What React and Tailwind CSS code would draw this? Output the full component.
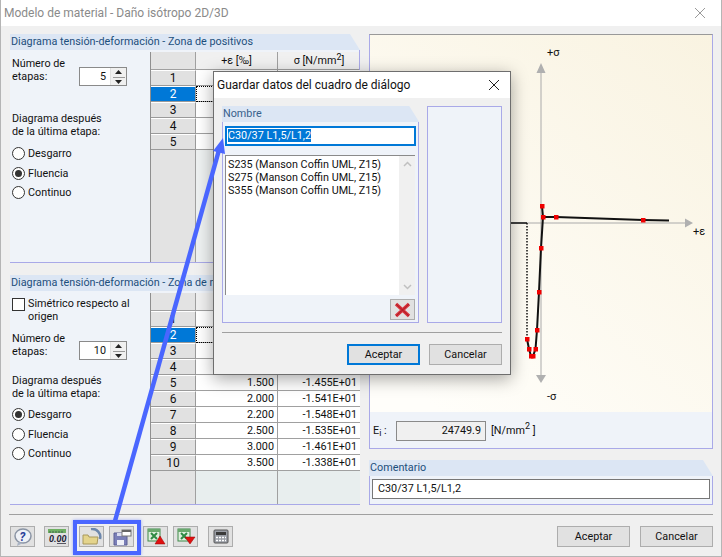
const fontCls = "font-['Roboto','Liberation_Sans',sans-serif]";

function PanelHeader({ children, className = '' }) {
  return (
    <div className={`h-4 bg-[#dce6f4] pl-[1px] text-[10.8px] leading-4 text-[#1c4f7c] whitespace-nowrap overflow-hidden [clip-path:polygon(0_0,calc(100%-10px)_0,100%_100%,0_100%)] ${className}`}>
      {children}
    </div>
  );
}

function Radio({ label, checked }) {
  return (
    <div className="flex items-center gap-[3px] h-[13px]">
      <span className="w-[13px] h-[13px] rounded-full border border-[#333] bg-white flex items-center justify-center shrink-0">
        {checked && <span className="w-[7px] h-[7px] rounded-full bg-[#333]" />}
      </span>
      <span>{label}</span>
    </div>
  );
}

function Spinner({ value, className = '' }) {
  return (
    <div className={`w-12 h-[19px] border border-[#8a8a8a] bg-white flex shrink-0 ${className}`}>
      <div className="flex-1 text-right pr-1 leading-[17px]">{value}</div>
      <div className="w-[16px] bg-[#f0f0f0] flex flex-col items-center justify-center gap-[1px] border-l border-[#e0e0e0]">
        <svg width="9" height="6" viewBox="0 0 9 6" className="mb-[1px]"><path d="M4.5 1 L8 5 L1 5 Z" fill="#222" /></svg>
        <div className="w-[12px] h-[1px] bg-[#999]" />
        <svg width="9" height="6" viewBox="0 0 9 6"><path d="M1 1 L8 1 L4.5 5 Z" fill="#222" /></svg>
      </div>
    </div>
  );
}

function RowHead({ n, active }) {
  return (
    <div className={`h-4 border-b border-r border-[#9a9a9a] border-t-[1px] border-t-white text-center text-[12px] leading-[14px] ${active ? 'bg-[#0078d7] text-white' : 'bg-[#e1e1e1]'}`}>
      {n}
    </div>
  );
}

function DataTable({ rows, fill }) {
  return (
    <div className="w-[209px] h-full flex flex-col border-l border-[#8f8f8f]">
      <div className="grid grid-cols-[45px_82px_82px] h-[18px] border-b border-[#a0a0a0] bg-[#f0f0f0] text-center leading-[17px]">
        <div className="bg-[#e3e3e3] border-r border-[#a0a0a0]" />
        <div className="border-r border-[#a0a0a0]">+ε [‰]</div>
        <div>σ [N/mm<sup className="text-[9px] leading-none">2</sup>]</div>
      </div>
      {rows.map((r, i) => (
        <div key={i} className="grid grid-cols-[45px_82px_82px] h-4">
          <RowHead n={i + 1} active={i === 1} />
          <div className={`bg-white border-b border-r border-[#a0a0a0] text-right pr-[3px] leading-[15px] ${i === 1 ? 'outline-1 outline-dotted outline-black -outline-offset-1' : ''}`}>{r[0]}</div>
          <div className="bg-white border-b border-[#a0a0a0] text-right pr-[3px] leading-[15px]">{r[1]}</div>
        </div>
      ))}
      <div className="flex-1 grid grid-cols-[45px_82px_82px]">
        <div className="bg-[#e3e3e3] border-r border-[#a0a0a0]" />
        <div className={`${fill} border-r border-[#a0a0a0]`} />
        <div className={fill} />
      </div>
    </div>
  );
}

function IconBtn({ children, className = '' }) {
  return (
    <button className={`w-[25px] h-[21px] border border-[#adadad] bg-[#e1e1e1] flex items-center justify-center shrink-0 ${className}`}>
      {children}
    </button>
  );
}

function DlgBtn({ children, primary, w = 'w-[73px]' }) {
  return (
    <button className={`${w} h-[21px] bg-[#e1e1e1] leading-[17px] ${primary ? 'border-2 border-[#0078d7]' : 'border border-[#adadad]'}`}>
      {children}
    </button>
  );
}

function ExcelIcon({ down }) {
  return (
    <svg width="20" height="18" viewBox="0 0 20 18">
      <rect x="2" y="1" width="12" height="12" fill="#dfeedd" stroke="#3f8a4a" />
      <path d="M2 1h12v3H2z" fill="#6aa86e" />
      <path d="M5 5 L11 11 M11 5 L5 11" stroke="#2f8a45" strokeWidth="2" />
      {down
        ? <path d="M9 9 H19 L14 16 Z" fill="#e01010" stroke="#900" strokeWidth="0.5" />
        : <path d="M14 8 L19 16 H9 Z" fill="#e01010" stroke="#900" strokeWidth="0.5" />}
    </svg>
  );
}

// stress-strain plot, coordinates are relative to the chart panel
function Chart() {
  const curve = [[172, 171], [173, 182], [186, 182], [273, 185], [299, 185.5]];
  const neg = [[157, 304], [159, 314], [161, 321], [163, 321], [165.5, 314], [167, 295], [169, 257], [171, 213], [173, 182]];
  const pts = [[172, 171], [173, 182], [186, 182], [273, 185], [171, 213], [169, 257], [167, 295], [165.5, 314], [163, 321], [161, 321], [159, 314], [157, 304]];
  return (
    <svg width="342" height="377" viewBox="0 0 342 377" className="block">
      <defs>
        <linearGradient id="bgGrad" x1="1" y1="0" x2="0.2" y2="1">
          <stop offset="0" stopColor="#f9f3e1" />
          <stop offset="1" stopColor="#fffefa" />
        </linearGradient>
      </defs>
      <rect width="342" height="377" fill="url(#bgGrad)" />
      <path d="M171 34 V342 M12 188 H318" stroke="#aaa" strokeWidth="1" fill="none" />
      <path d="M171 28 L166.500 38 H175.500 Z M171 348 L166 340 H176 Z M323 188 L315 183.500 V192.500 Z" fill="#b0b0b0" />
      <path d="M12 188 H157" stroke="#111" strokeWidth="1.500" />
      <path d="M157 188 V304" stroke="#111" strokeWidth="1.500" strokeDasharray="1.500 1.500" />
      <polyline points={curve.map(p => p.join(',')).join(' ')} fill="none" stroke="#111" strokeWidth="2" />
      <polyline points={neg.map(p => p.join(',')).join(' ')} fill="none" stroke="#111" strokeWidth="2" />
      {pts.map((p, i) => <rect key={i} x={p[0] - 2} y={p[1] - 2} width="4.500" height="4.500" fill="#f00000" />)}
      <text x="177" y="21" fontSize="11" fill="#111">+σ</text>
      <text x="323" y="200" fontSize="11" fill="#111">+ε</text>
      <text x="177" y="365" fontSize="11" fill="#111">-σ</text>
    </svg>
  );
}

export default function App() {
  const upper = [['', ''], ['', ''], ['', ''], ['', ''], ['', '']];
  const lower = [['', ''], ['', ''], ['', ''], ['', ''],
    ['1.500', '-1.455E+01'], ['2.000', '-1.541E+01'], ['2.200', '-1.548E+01'],
    ['2.500', '-1.535E+01'], ['3.000', '-1.461E+01'], ['3.500', '-1.338E+01']];

  return (
    <div className={`relative w-[722px] h-[557px] overflow-hidden bg-[#f0f0f0] border-x border-b border-[#b5b5b5] text-[10.8px] text-[#111] ${fontCls}`}>
      {/* title bar */}
      <div className="h-[26px] bg-white flex items-center justify-between pl-[3px] pr-[15px]">
        <span className="text-[12px] text-[#8a8a8a]">Modelo de material - Daño isótropo 2D/3D</span>
        <svg width="12" height="12" viewBox="0 0 12 12"><path d="M1 1 L11 11 M11 1 L1 11" stroke="#9a9a9a" strokeWidth="1" /></svg>
      </div>

      <div className="flex gap-[9px] pl-[9px] pr-[7px] pt-2">
        {/* left column */}
        <div className="w-[350px] flex flex-col gap-[12px]">
          <div className="h-[229px] flex flex-col">
            <PanelHeader>Diagrama tensión-deformación - Zona de positivos</PanelHeader>
            <div className="flex-1 min-h-0 flex bg-[#eff3f9] border-b border-r border-[#a9a9e8] pt-[2px] pl-[2px]">
              <div className="w-[138px] pt-[5px] leading-[13px]">
                <div className="flex items-start">
                  <span className="w-[67px]">Número de etapas:</span>
                  <Spinner value="5" className="mt-[10px]" />
                </div>
                <div className="mt-[26px]">Diagrama después<br />de la última etapa:</div>
                <div className="mt-[9px] flex flex-col gap-[6.5px]">
                  <Radio label="Desgarro" />
                  <Radio label="Fluencia" checked />
                  <Radio label="Continuo" />
                </div>
              </div>
              <DataTable rows={upper} fill="bg-[#eef1f1]" />
            </div>
          </div>

          <div className="h-[230px] flex flex-col">
            <PanelHeader>Diagrama tensión-deformación - Zona de negativos</PanelHeader>
            <div className="flex-1 min-h-0 flex bg-[#eff3f9] border-b border-r border-[#a9a9e8] pt-[2px] pl-[2px]">
              <div className="w-[138px] pt-[4px] leading-[13px]">
                <div className="flex gap-[3px]">
                  <span className="w-[13px] h-[13px] mt-[1px] border border-[#333] bg-white shrink-0" />
                  <span>Simétrico respecto al origen</span>
                </div>
                <div className="mt-[9px] flex items-start">
                  <span className="w-[67px]">Número de etapas:</span>
                  <Spinner value="10" className="mt-[9px]" />
                </div>
                <div className="mt-[14px]">Diagrama después<br />de la última etapa:</div>
                <div className="mt-[8px] flex flex-col gap-[6.5px]">
                  <Radio label="Desgarro" checked />
                  <Radio label="Fluencia" />
                  <Radio label="Continuo" />
                </div>
              </div>
              <DataTable rows={lower} fill="bg-[#e8eeee]" />
            </div>
          </div>
        </div>

        {/* right column */}
        <div className="w-[344px] flex flex-col gap-[11px]">
          <div className="h-[415px] flex flex-col bg-[#eff3f9] border-x border-b border-[#a9a9e8] border-t border-t-[#999]">
            <Chart />
            <div className="flex items-center pt-[9px] pl-[3px]">
              <span className="w-[23px]">E<sub className="text-[9px]">i</sub> :</span>
              <div className="w-[90px] h-[20px] border border-[#8a8a8a] bg-[#f0f0f0] text-right pr-1 leading-[18px]">24749.9</div>
              <span className="ml-[5px]">[N/mm<sup className="text-[9px] leading-none">2</sup> ]</span>
            </div>
          </div>
          <div className="h-[45px] flex flex-col">
            <PanelHeader>Comentario</PanelHeader>
            <div className="flex-1 bg-[#eff3f9] border-b border-x border-[#a9a9e8] pt-[3px] pl-[2px] pr-[2px]">
              <div className="h-[20px] border border-[#777] bg-white pl-[5px] leading-[18px]">C30/37 L1,5/L1,2</div>
            </div>
          </div>
        </div>
      </div>

      {/* bottom bar */}
      <div className="mx-[8px] mt-[9px] h-[1px] bg-[#a0a0a0]" />
      <div className="flex items-center pl-[9px] pr-[8px] pt-[11px]">
        <IconBtn>
          <svg width="20" height="18" viewBox="0 0 20 18">
            <ellipse cx="10" cy="8" rx="8" ry="7" fill="#eef1f6" stroke="#8a94a4" strokeWidth="1.500" />
            <path d="M5 14 L4 18 L10 15 Z" fill="#aab4c4" />
            <text x="6.500" y="12.500" fontSize="12" fontWeight="700" fontStyle="italic" fill="#2a3f9a">?</text>
          </svg>
        </IconBtn>
        <IconBtn className="ml-[9px]">
          <svg width="20" height="16" viewBox="0 0 20 16">
            <rect x="1" y="0" width="18" height="4" fill="#6fb063" />
            <path d="M3 4V2M6 4V2M9 4V2M12 4V2M15 4V2" stroke="#234" strokeWidth="0.6" />
            <text x="2" y="13" fontSize="9" fontStyle="italic" fontWeight="700" fill="#223">0.00</text>
            <path d="M10 14.500 H19" stroke="#334" strokeWidth="0.8" />
          </svg>
        </IconBtn>
        <IconBtn className="ml-[10px]">
          <svg width="20" height="18" viewBox="0 0 20 18">
            <path d="M9 1 A8 8 0 0 1 18 11" fill="none" stroke="#6c87ac" strokeWidth="2.500" />
            <path d="M1 7 V16 H15 L16 9 H7 L6 7 Z" fill="#e4d48c" stroke="#a8985c" />
          </svg>
        </IconBtn>
        <IconBtn className="ml-[5px]">
          <svg width="20" height="18" viewBox="0 0 20 18">
            <path d="M2 5 H13 L15 7 V17 H2 Z" fill="#7a7fb8" stroke="#5a5f94" />
            <rect x="5" y="12" width="7" height="5" fill="#eef0f8" />
            <rect x="5" y="5" width="6" height="3" fill="#d9dbee" />
            <rect x="10" y="2" width="9" height="6" fill="#fff" stroke="#777" />
            <rect x="10" y="2" width="9" height="2" fill="#666" />
          </svg>
        </IconBtn>
        <IconBtn className="ml-[9px]"><ExcelIcon /></IconBtn>
        <IconBtn className="ml-[5px]"><ExcelIcon down /></IconBtn>
        <IconBtn className="ml-[10px]">
          <svg width="16" height="15" viewBox="0 0 16 15">
            <rect x="1" y="1" width="14" height="13" rx="1" fill="#9a9ea6" stroke="#555" />
            <rect x="3" y="3" width="10" height="3" fill="#3a3a3a" />
            <path d="M3 8.500h2M6 8.500h2M9 8.500h2M12 8.500h1M3 11.500h2M6 11.500h2M9 11.500h2M12 11.500h1" stroke="#fff" strokeWidth="1.300" />
          </svg>
        </IconBtn>
        <div className="flex-1" />
        <DlgBtn>Aceptar</DlgBtn>
        <div className="w-[10px]" />
        <DlgBtn>Cancelar</DlgBtn>
      </div>

      {/* save dialog, floats over the window */}
      <div className="absolute left-[212px] top-[71px] w-[298px] h-[304px] bg-[#f0f0f0] border border-[#6e6e6e] shadow-[0_4px_16px_rgba(0,0,0,0.35)] flex flex-col">
        <div className="h-[26px] bg-white flex items-center justify-between pl-[3px] pr-[10px] shrink-0">
          <span className="text-[12px] text-[#111]">Guardar datos del cuadro de diálogo</span>
          <svg width="12" height="12" viewBox="0 0 12 12"><path d="M1 1 L11 11 M11 1 L1 11" stroke="#222" strokeWidth="1" /></svg>
        </div>
        <div className="flex gap-[8px] pl-[8px] pr-[8px] pt-[8px]">
          <div className="w-[198px] h-[217px] flex flex-col">
            <PanelHeader className="text-[#38618c]">Nombre</PanelHeader>
            <div className="flex-1 bg-[#eff3f9] border-x border-b border-[#a9a9e8] px-[2px] pt-[4px] flex flex-col">
              <div className="h-[20px] border-2 border-[#0078d7] bg-white pl-[1px] leading-4 w-[191px]">
                <span className="bg-[#0078d7] text-white">C30/37 L1,5/L1,2</span>
              </div>
              <div className="mt-[9px] h-[140px] w-[190px] border-t border-l border-[#8a8a8a] bg-white flex">
                <div className="flex-1 pl-[2px] pt-[2px] leading-[13px] whitespace-nowrap">
                  <div>S235 (Manson Coffin UML, Z15)</div>
                  <div>S275 (Manson Coffin UML, Z15)</div>
                  <div>S355 (Manson Coffin UML, Z15)</div>
                </div>
                <div className="w-[16px] bg-[#f0f0f0] flex flex-col justify-between items-center py-[5px]">
                  <svg width="9" height="6" viewBox="0 0 9 6"><path d="M1 5 L4.500 1.500 L8 5" fill="none" stroke="#c0c0c0" strokeWidth="1.500" /></svg>
                  <svg width="9" height="6" viewBox="0 0 9 6"><path d="M1 1 L4.500 4.500 L8 1" fill="none" stroke="#c0c0c0" strokeWidth="1.500" /></svg>
                </div>
              </div>
              <div className="flex justify-end mt-[4px] pr-[1px]">
                <IconBtn>
                  <svg width="17" height="16" viewBox="0 0 17 16">
                    <path d="M2 2 L15 14 M15 2 L2 14" stroke="#d8303a" strokeWidth="3.400" />
                    <path d="M2 2 L15 14 M15 2 L2 14" stroke="#8a1018" strokeWidth="0.600" />
                  </svg>
                </IconBtn>
              </div>
            </div>
          </div>
          <div className="w-[75px] h-[217px] bg-[#eff3f9] border border-[#a9a9e8]" />
        </div>
        <div className="mx-[8px] mt-[9px] h-[1px] bg-[#a0a0a0]" />
        <div className="flex justify-end gap-[9px] pr-[8px] pt-[11px]">
          <DlgBtn primary>Aceptar</DlgBtn>
          <DlgBtn>Cancelar</DlgBtn>
        </div>
      </div>

      {/* annotation: frame round the open/save buttons and the arrow to the name field */}
      <div className="absolute left-[72px] top-[520px] w-[68px] h-[35px] border-[4px] border-[#4a66ff] shadow-[0_0_3px_rgba(74,102,255,0.5)]" />
      <svg width="722" height="557" viewBox="0 0 722 557" className="absolute left-0 top-0 pointer-events-none">
        <path d="M114 521 L218 150" stroke="#4a66ff" strokeWidth="4.500" fill="none" />
        <path d="M222 138 L224 154 L212 151 Z" fill="#4a66ff" />
      </svg>
    </div>
  );
}
